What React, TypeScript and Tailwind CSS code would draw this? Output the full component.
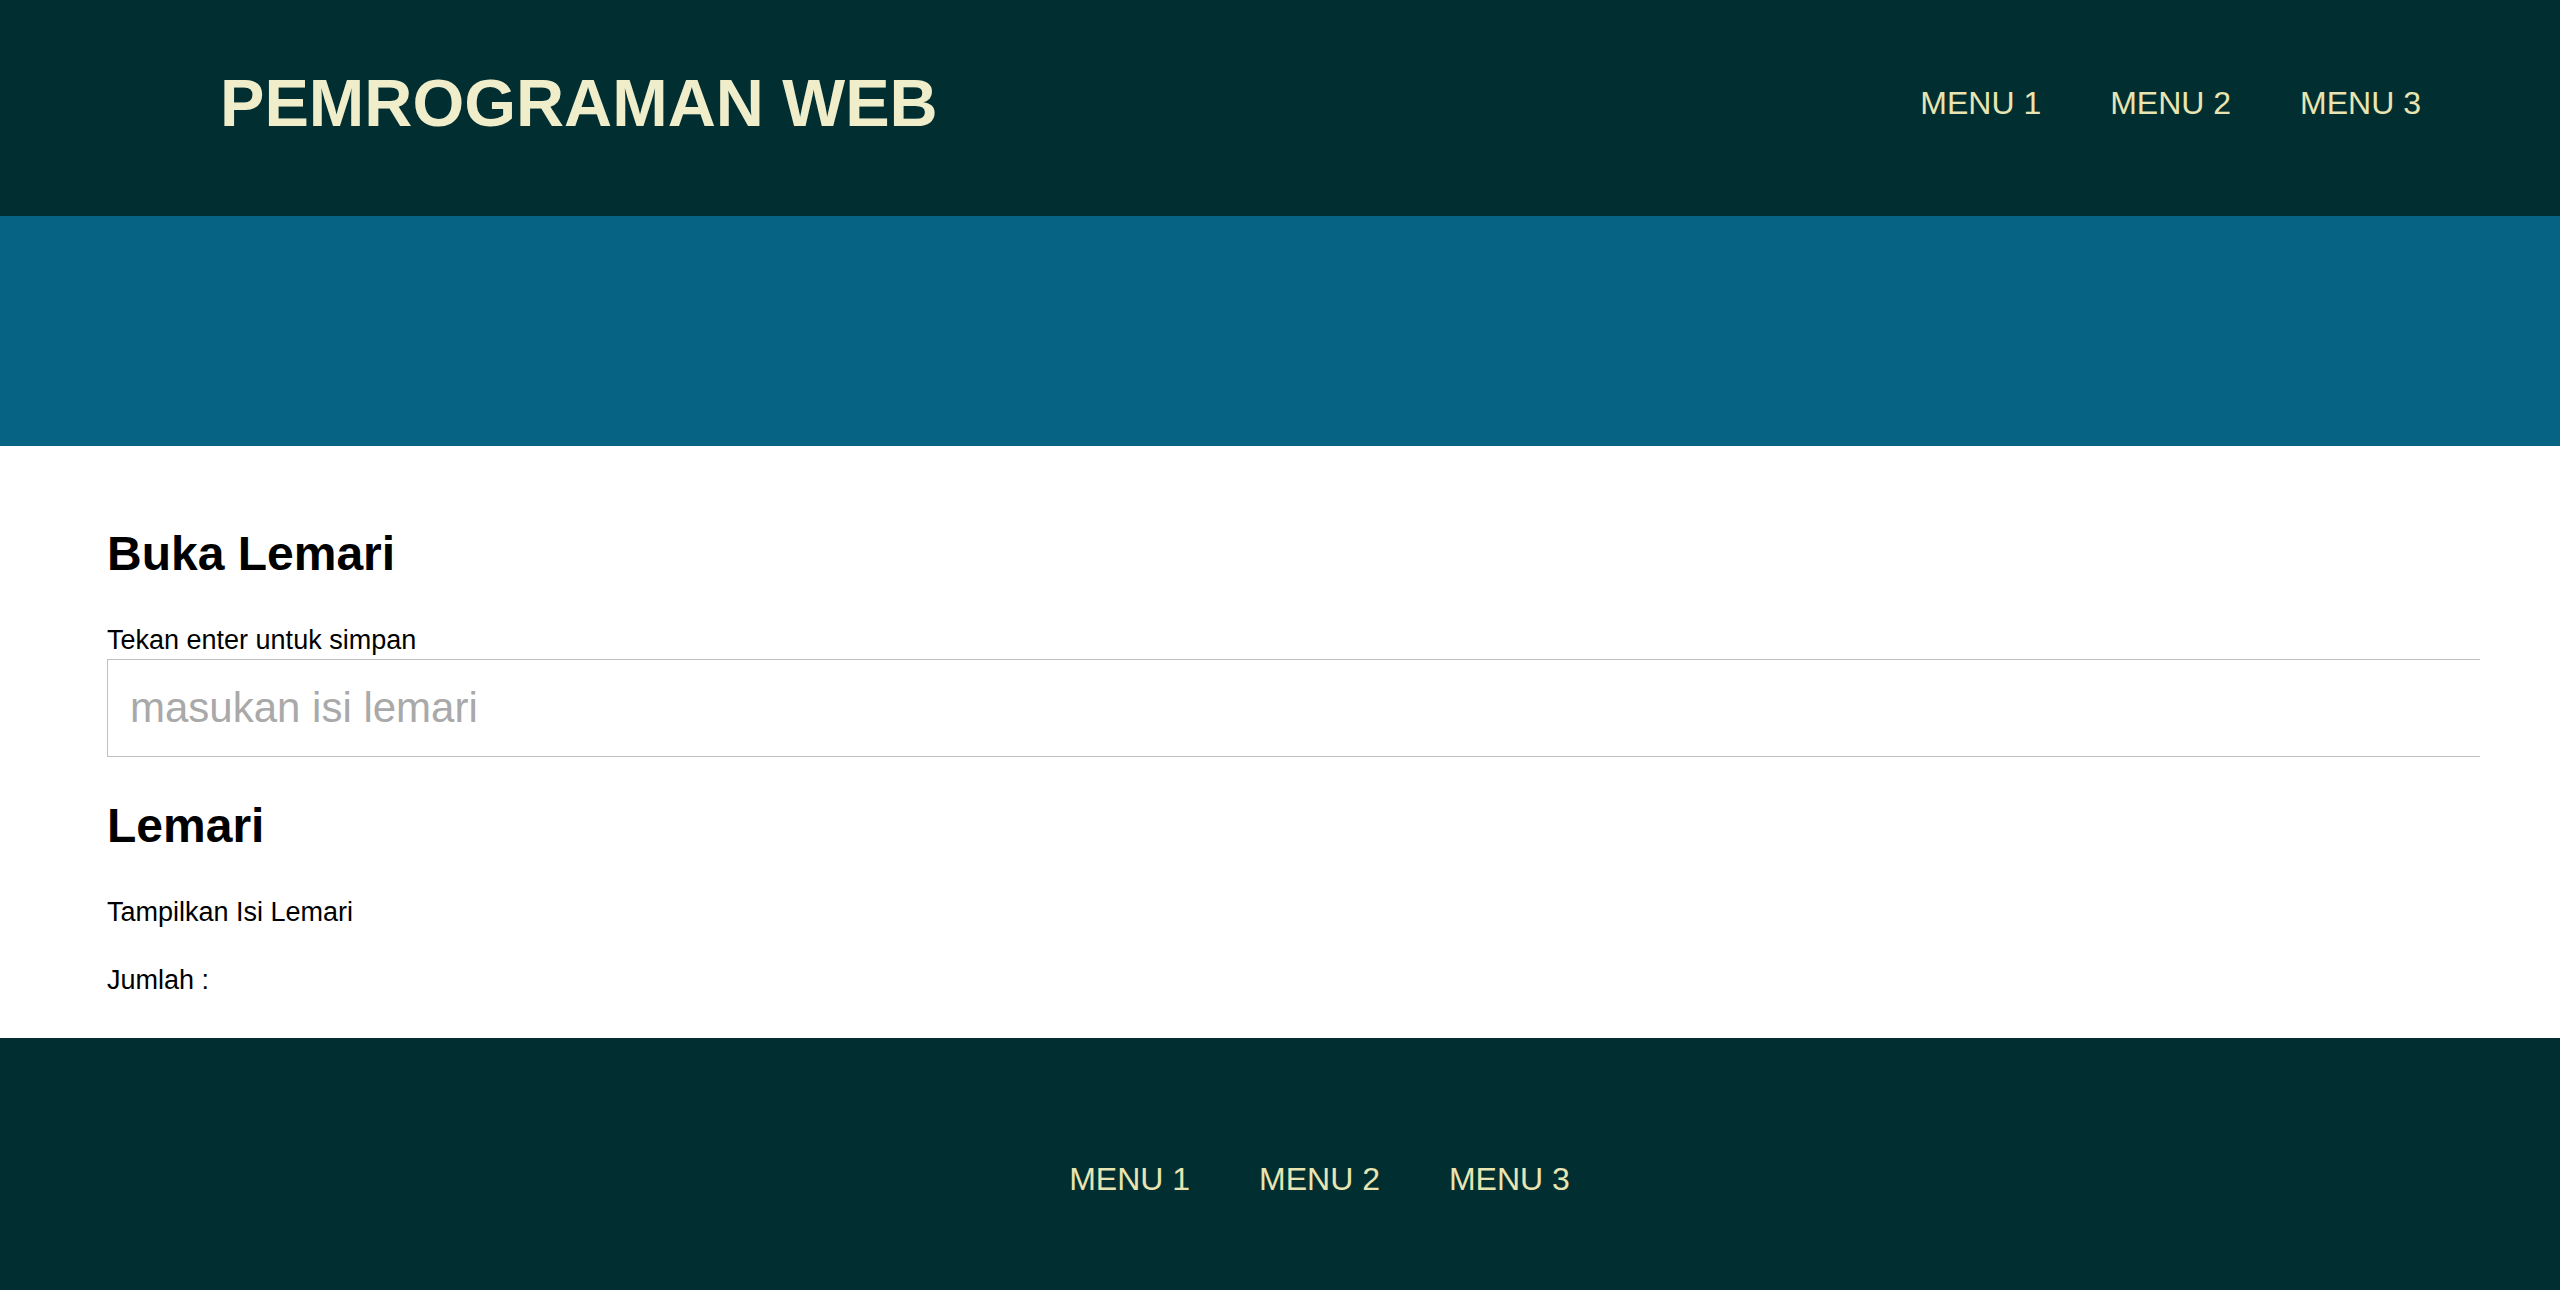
import React from "react";

const menus = ["MENU 1", "MENU 2", "MENU 3"];

function Menu({ className }: { className: string }) {
  return (
    <nav className={className}>
      {menus.map((m) => (
        <a key={m} href="#" className="block whitespace-nowrap text-[32px] leading-none text-[#e9e5b2]">
          {m}
        </a>
      ))}
    </nav>
  );
}

export default function App() {
  return (
    <div className="w-[2560px] bg-white font-['Liberation_Sans',Arial,sans-serif] text-black">
      <header className="h-[216px] bg-[#012f31] flex items-center justify-between pl-[220px] pr-[139px] pb-[10px]">
        <h1 className="m-0 font-bold text-[66.6px] leading-none text-[#f0edcb] whitespace-nowrap">
          PEMROGRAMAN WEB
        </h1>
        <Menu className="flex gap-[69px]" />
      </header>

      <div className="h-[230px] bg-[#066384]" />

      <main className="pl-[107px] pr-[80px] pt-[84px] pb-[44px] flex flex-col">
        <h2 className="m-0 text-[48px] font-bold leading-none">Buka Lemari</h2>
        <label className="mt-[49px] text-[27px] leading-none">Tekan enter untuk simpan</label>
        <input
          type="text"
          placeholder="masukan isi lemari"
          className="mt-[5px] h-[98px] w-full border border-r-0 border-[#c0c0c0] pl-[22px] text-[42px] outline-none placeholder:text-[#a9a9a9] font-['Liberation_Sans',Arial,sans-serif]"
        />
        <h2 className="mt-[45px] text-[48px] font-bold leading-none">Lemari</h2>
        <p className="mt-[49px] text-[27px] leading-none">Tampilkan Isi Lemari</p>
        <p className="mt-[41px] text-[27px] leading-none">Jumlah :</p>
      </main>

      <footer className="h-[252px] bg-[#012f31] pt-[125px] flex justify-center pl-[79px]">
        <Menu className="flex gap-[69px] h-[32px]" />
      </footer>
    </div>
  );
}
